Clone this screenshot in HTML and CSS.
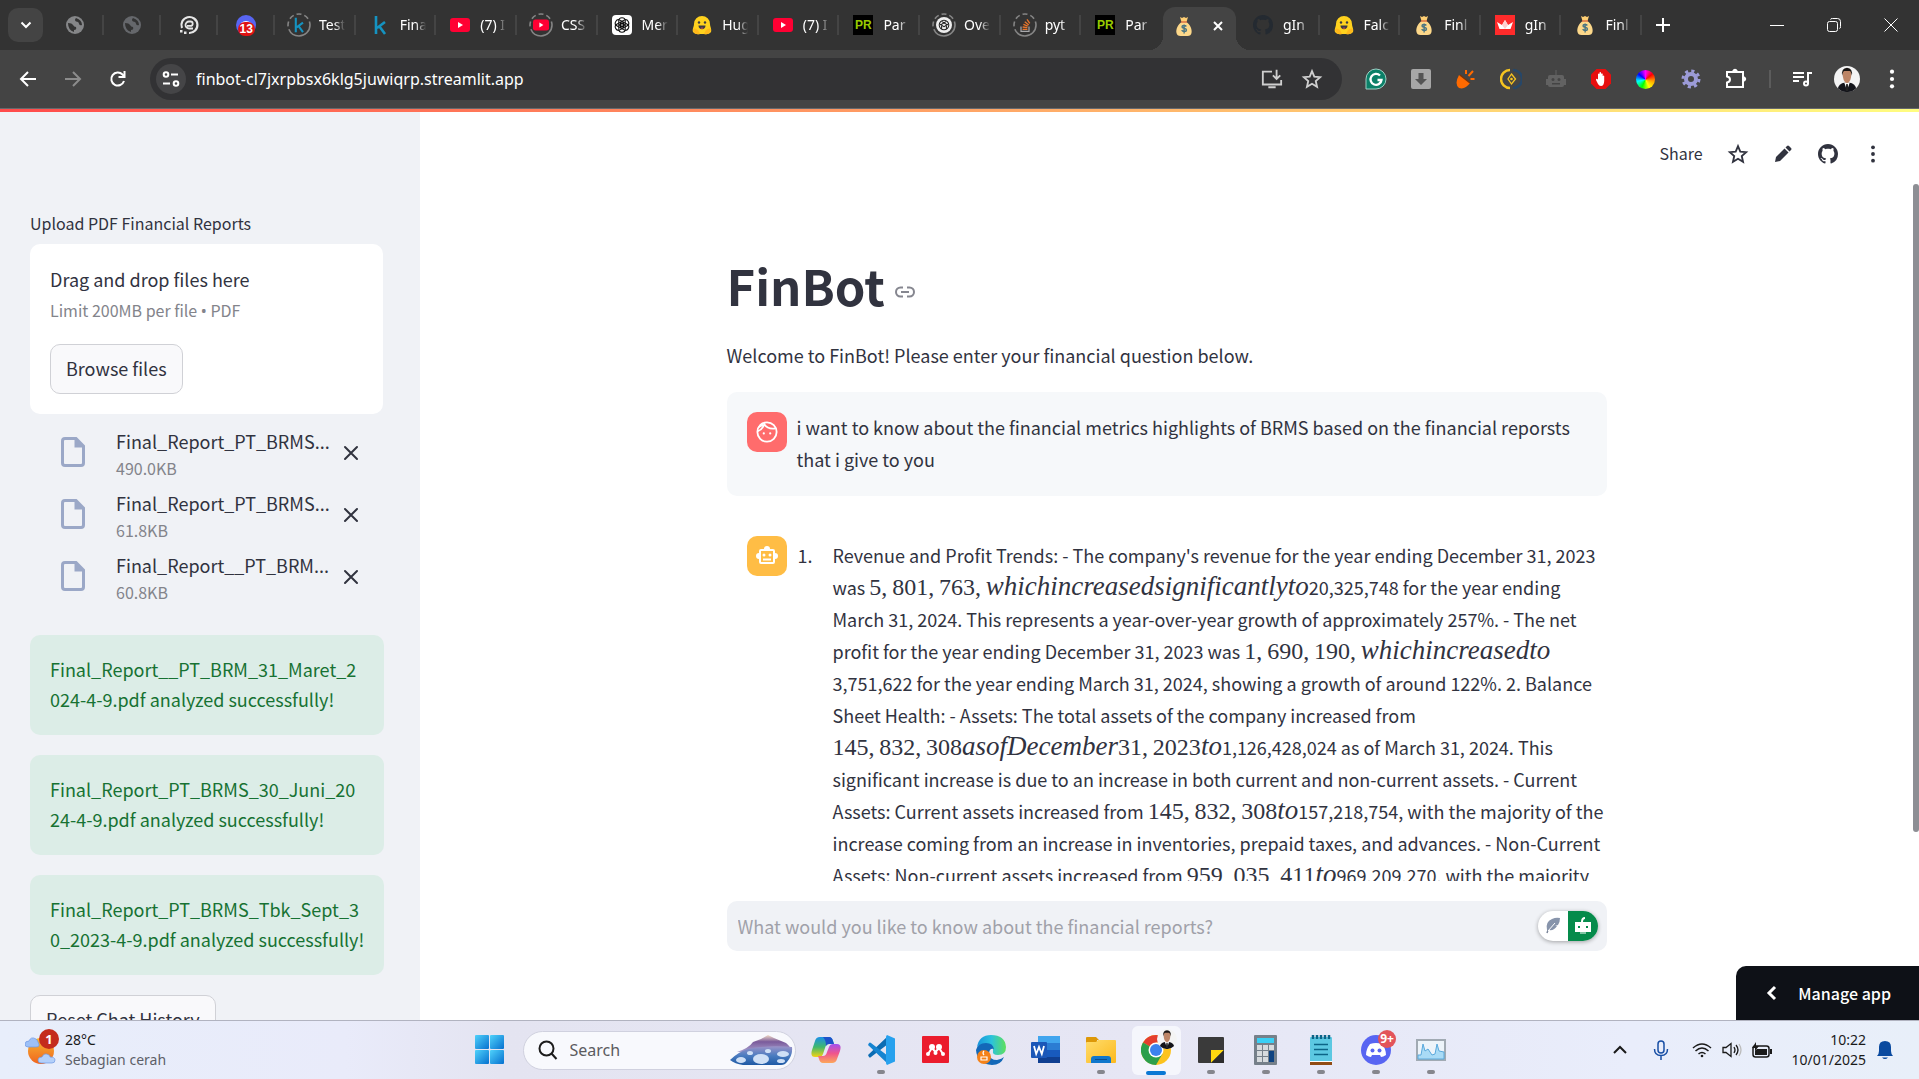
FILE: index.html
```html
<!DOCTYPE html>
<html lang="en">
<head>
<meta charset="utf-8">
<title>FinBot</title>
<link rel="stylesheet" href="styles.css">
</head>
<body>
<svg class="defs" aria-hidden="true">
  <defs>
    <linearGradient id="gWin" x1="0" y1="0" x2="1" y2="1"><stop offset="0" stop-color="#4fd2fb"/><stop offset="1" stop-color="#0670cf"/></linearGradient>
    <linearGradient id="gMount" x1="0" y1="0" x2="0" y2="1"><stop offset="0" stop-color="#f3dcc6"/><stop offset=".4" stop-color="#7a5b9b"/><stop offset="1" stop-color="#a9a0cf"/></linearGradient>
    <linearGradient id="gLake" x1="0" y1="0" x2="0" y2="1"><stop offset="0" stop-color="#9b93c8"/><stop offset=".5" stop-color="#4a7cc0"/><stop offset="1" stop-color="#1f5aa5"/></linearGradient>
    <linearGradient id="gCopA" x1="0" y1="0" x2="0" y2="1"><stop offset="0" stop-color="#1b90e8"/><stop offset=".5" stop-color="#3fb86b"/><stop offset="1" stop-color="#f4d313"/></linearGradient>
    <linearGradient id="gCopB" x1="0" y1="0" x2="0" y2="1"><stop offset="0" stop-color="#a34ff0"/><stop offset=".5" stop-color="#f0558c"/><stop offset="1" stop-color="#fda75a"/></linearGradient>
    <linearGradient id="gEdge" x1="0" y1="0" x2="1" y2="0"><stop offset="0" stop-color="#1793dc"/><stop offset=".5" stop-color="#2bc2dc"/><stop offset="1" stop-color="#5fe05c"/></linearGradient>
    <linearGradient id="gFolder" x1="0" y1="0" x2="1" y2="1"><stop offset="0" stop-color="#ffdc6c"/><stop offset="1" stop-color="#fcb91c"/></linearGradient>
    <linearGradient id="gSun" x1="0" y1="0" x2="0" y2="1"><stop offset="0" stop-color="#f7b733"/><stop offset="1" stop-color="#f0641e"/></linearGradient>
  </defs>
  <symbol id="globe" viewBox="0 0 20 20"><circle cx="10" cy="10" r="9" fill="currentColor"/><path d="M3 8q4 0 5 2 1 2 3 2 1 3-2 3v2Q3 15 3 8zM11 3q-2 2 0 3.500 3 0 3 2.500 1 2 3 1 0-5-6-7z" fill="#333"/></symbol>
  <symbol id="ecircle" viewBox="0 0 20 20"><path d="M3 13A8 8 0 1 1 10 18" fill="none" stroke="#e6e6e6" stroke-width="2.200"/><path d="M14 13.500H10a3.500 3.500 0 0 1 0-7h1.500a2.200 2.200 0 0 1 0 4.400H8" fill="none" stroke="#e6e6e6" stroke-width="1.800"/><path d="M1 15h2.500v2.500H1zM5 16.500h2.500V19H5z" fill="#e6e6e6"/></symbol>
  <symbol id="ring" viewBox="0 0 24 24"><circle cx="12" cy="12" r="11" fill="none" stroke="#858585" stroke-width="1.600" stroke-dasharray="30 3 5 3 5 3 5 3 5 3"/></symbol>
  <symbol id="kaggle" viewBox="0 0 20 20"><path d="M6 1v18M15 7l-8 6M9.500 11.500L15 19" fill="none" stroke="#1593c1" stroke-width="2.600"/></symbol>
  <symbol id="yt" viewBox="0 0 20 20"><rect y="3" width="20" height="14" rx="3" fill="#ff0033"/><path d="M8 7v6l5-3z" fill="#fff"/></symbol>
  <symbol id="gpt" viewBox="0 0 20 20"><rect width="20" height="20" rx="4" fill="#fff"/><g fill="none" stroke="#111" stroke-width="1.100"><path id="petal" d="M10 2.800q3.200 0 3.200 3v4L10 11.700 6.800 9.800v-4q0-3 3.200-3z"/><use href="#petal" transform="rotate(60 10 10)"/><use href="#petal" transform="rotate(120 10 10)"/><use href="#petal" transform="rotate(180 10 10)"/><use href="#petal" transform="rotate(240 10 10)"/><use href="#petal" transform="rotate(300 10 10)"/></g></symbol>
  <symbol id="gptround" viewBox="0 0 20 20"><circle cx="10" cy="10" r="10" fill="#eee"/><g fill="none" stroke="#222" stroke-width="1.300"><circle cx="10" cy="10" r="6"/><path d="M7 5.500l6 3.500v6M13 5.500L7 9v6M5 9l5 3 5-3"/></g></symbol>
  <symbol id="hug" viewBox="0 0 20 20"><path d="M10 1a8 8 0 0 1 8 8c0 3 2 5 1 8-2 3-6 2-9 2s-7 1-9-2c-1-3 1-5 1-8a8 8 0 0 1 8-8z" fill="#ffd21e"/><path d="M1 15c1-3 3-1 5 0l2 4c-3 1-6 0-7-4zM19 15c-1-3-3-1-5 0l-2 4c3 1 6 0 7-4z" fill="#ffb81b"/><circle cx="7" cy="7.500" r="1.200" fill="#3a3b45"/><circle cx="13" cy="7.500" r="1.200" fill="#3a3b45"/><path d="M6.500 10.500h7c0 5-7 5-7 0z" fill="#3a3b45"/><path d="M8.500 13q1.500-1 3 0-1.500 1.500-3 0" fill="#ef4e4e"/></symbol>
  <symbol id="so" viewBox="0 0 20 20"><path d="M5 12v6h10v-6" fill="none" stroke="#a9a9ab" stroke-width="1.500"/><path d="M7 15.500h6M7 12.500l6 .8M8 9.300l5.500 2M9.700 6l5 4M12.500 3l3.500 5" stroke="#e8762c" stroke-width="1.700"/></symbol>
  <symbol id="bag" viewBox="0 0 20 20"><path d="M6 1l2 1 2-1 2 1 2-1-1.500 5h-5z" fill="#ffcf74"/><path d="M7.500 6h5c3 2 6 7 5 11q-.5 3-4 3h-7q-3.500 0-4-3c-1-4 2-9 5-11z" fill="#fdd88a"/><path d="M7 6h6" stroke="#d96a41" stroke-width="1.400"/><path d="M12.300 10.500c-1-1.500-4.300-1.300-4.300.4s4.500 1 4.500 3-3.800 2-4.800.3M10.100 8.500v9" fill="none" stroke="#4a7482" stroke-width="1.400"/></symbol>
  <symbol id="github" viewBox="0 0 16 16"><path fill="currentColor" d="M8 0C3.580 0 0 3.580 0 8c0 3.540 2.290 6.530 5.470 7.590.4.070.55-.17.55-.38 0-.19-.01-.82-.01-1.490-2.010.37-2.530-.49-2.690-.94-.09-.23-.48-.94-.82-1.130-.28-.15-.68-.52-.01-.53.63-.01 1.080.58 1.230.82.72 1.210 1.870.87 2.330.66.07-.52.28-.87.51-1.070-1.780-.2-3.640-.89-3.640-3.950 0-.87.31-1.590.82-2.150-.08-.2-.36-1.020.08-2.120 0 0 .67-.21 2.200.82.64-.18 1.320-.27 2-.27s1.360.09 2 .27c1.530-1.040 2.200-.82 2.200-.82.44 1.100.16 1.920.08 2.120.51.56.82 1.270.82 2.150 0 3.070-1.870 3.750-3.650 3.950.29.25.54.73.54 1.480 0 1.070-.01 1.930-.01 2.200 0 .21.15.46.55.38A8.010 8.010 0 0 0 16 8c0-4.420-3.580-8-8-8z"/></symbol>
  <symbol id="crown" viewBox="0 0 20 20"><rect width="20" height="20" fill="#ff2b2b"/><path d="M2 7l5 3 3-5 3 5 5-3-2.500 7h-11z" fill="#fff"/><path d="M10 5l3 5-3 4-3-4z" fill="#ffd0d0"/></symbol>
  <symbol id="star" viewBox="0 0 24 24"><path fill="none" stroke="currentColor" stroke-width="2" d="M12 3.500l2.500 5.900 6.400.6-4.800 4.200 1.400 6.300-5.500-3.300-5.500 3.300 1.400-6.300L3.100 10l6.400-.6z"/></symbol>
  <symbol id="dots" viewBox="0 0 24 24"><g fill="currentColor"><circle cx="12" cy="4" r="2.300"/><circle cx="12" cy="12" r="2.300"/><circle cx="12" cy="20" r="2.300"/></g></symbol>
  <symbol id="file" viewBox="0 0 24 30"><path d="M1.500 4Q1.500 1.500 4 1.500h11l7.500 7.500v17q0 2.500-2.500 2.500H4q-2.500 0-2.500-2.500z" fill="none" stroke="#9ba8c7" stroke-width="3"/><path d="M13.500 1v9.500H23L15 1z" fill="#9ba8c7"/></symbol>
  <symbol id="cross" viewBox="0 0 16 16"><path d="M2 2l12 12M14 2L2 14" stroke="currentColor" stroke-width="2" stroke-linecap="round"/></symbol>
  <symbol id="man" viewBox="0 0 24 24"><circle cx="12" cy="12" r="12" fill="#f4f4f4"/><path d="M3.500 20.500Q5 16 9.500 15.500h5q4.500.5 6 5A12 12 0 0 1 3.500 20.500z" fill="#14151b"/><path d="M9.500 15.500l2.500 7 2.500-7z" fill="#fff"/><path d="M11.300 16.500h1.400l.6 5-1.300 2-1.300-2z" fill="#222"/><path d="M8 7q0-4 4-4t4 4q0 8-4 9-4-1-4-9z" fill="#bd8566"/><path d="M7.500 9q-1-7 4.500-7.500 5.500.5 4.500 7.500-.5-4-2-4.500h-5q-1.500.5-2 4.500z" fill="#191513"/></symbol>
</svg>

<header class="browser">
  <div class="tabstrip">
    <button class="tab-search" aria-label="Search tabs"><svg width="14" height="14" viewBox="0 0 14 14"><path d="M2.500 4.500L7 9l4.500-4.500" fill="none" stroke="#fff" stroke-width="2"/></svg></button>
    <nav class="tabs" aria-label="Tabs">
      <div class="tab pinned"><svg class="fav dim"><use href="#globe"/></svg></div>
      <div class="tab pinned"><svg class="fav dimmer"><use href="#globe"/></svg></div>
      <div class="tab pinned"><svg class="fav"><use href="#ecircle"/></svg></div>
      <div class="tab pinned"><span class="badged"><svg class="fav" viewBox="0 0 20 20"><circle cx="10" cy="10" r="10" fill="#5865f2"/><path d="M5 8q5-4 10 0z" fill="#fff"/></svg><b class="count">13</b></span></div>
      <div class="tab"><span class="ringed"><svg class="ring"><use href="#ring"/></svg><svg class="fav small"><use href="#kaggle"/></svg></span><span class="label">Test</span></div>
      <div class="tab"><span class="ringed"><svg class="fav"><use href="#kaggle"/></svg></span><span class="label">Fina</span></div>
      <div class="tab"><span class="ringed"><svg class="fav"><use href="#yt"/></svg></span><span class="label">(7) I</span></div>
      <div class="tab"><span class="ringed"><svg class="ring"><use href="#ring"/></svg><svg class="fav small"><use href="#yt"/></svg></span><span class="label">CSS</span></div>
      <div class="tab"><span class="ringed"><svg class="fav"><use href="#gpt"/></svg></span><span class="label">Mer</span></div>
      <div class="tab"><span class="ringed"><svg class="fav"><use href="#hug"/></svg></span><span class="label">Hug</span></div>
      <div class="tab"><span class="ringed"><svg class="fav"><use href="#yt"/></svg></span><span class="label">(7) I</span></div>
      <div class="tab"><span class="ringed"><i class="fav pr">PR</i></span><span class="label">Par</span></div>
      <div class="tab"><span class="ringed"><svg class="ring"><use href="#ring"/></svg><svg class="fav small"><use href="#gptround"/></svg></span><span class="label">Ove</span></div>
      <div class="tab"><span class="ringed"><svg class="ring"><use href="#ring"/></svg><svg class="fav small"><use href="#so"/></svg></span><span class="label">pyt</span></div>
      <div class="tab last"><span class="ringed"><i class="fav pr">PR</i></span><span class="label">Par</span></div>
      <div class="tab active"><svg class="fav"><use href="#bag"/></svg><button class="tab-close" aria-label="Close tab"><svg width="12" height="12"><path d="M2 2l8 8M10 2l-8 8" stroke="#fff" stroke-width="2"/></svg></button></div>
      <div class="tab"><span class="ringed"><svg class="fav ghdark"><use href="#github"/></svg></span><span class="label">gIn</span></div>
      <div class="tab"><span class="ringed"><svg class="fav"><use href="#hug"/></svg></span><span class="label">Falc</span></div>
      <div class="tab"><span class="ringed"><svg class="fav"><use href="#bag"/></svg></span><span class="label">Finl</span></div>
      <div class="tab"><span class="ringed"><svg class="fav"><use href="#crown"/></svg></span><span class="label">gIn</span></div>
      <div class="tab"><span class="ringed"><svg class="fav"><use href="#bag"/></svg></span><span class="label">Finl</span></div>
    </nav>
    <div class="window-side">
      <button class="newtab" aria-label="New tab"><svg width="14" height="14"><path d="M7 0v14M0 7h14" stroke="#fff" stroke-width="2"/></svg></button>
      <div class="window-controls">
        <button aria-label="Minimize"><svg width="14" height="14"><path d="M0 7.500h14" stroke="#fff"/></svg></button>
        <button aria-label="Restore"><svg width="14" height="14" fill="none" stroke="#fff"><rect x=".5" y="3.500" width="10" height="10" rx="2"/><path d="M3.500 1.500q0-1 2-1h5q3 0 3 3v5q0 2-1 2"/></svg></button>
        <button aria-label="Close"><svg width="14" height="14"><path d="M.5.5l13 13M13.500.5l-13 13" stroke="#fff"/></svg></button>
      </div>
    </div>
  </div>
  <div class="toolbar">
    <div class="nav-buttons">
      <button aria-label="Back"><svg width="18" height="18" fill="none" stroke="#fff" stroke-width="2"><path d="M17 9H2M9 2L2 9l7 7"/></svg></button>
      <button aria-label="Forward"><svg width="18" height="18" fill="none" stroke="#8c8c8c" stroke-width="2"><path d="M1 9h15M9 2l7 7-7 7"/></svg></button>
      <button aria-label="Reload"><svg width="18" height="18" fill="none" stroke="#fff" stroke-width="2"><path d="M15 11A6.500 6.500 0 1 1 13.500 4.500L15 6"/><path d="M15.500 1v6h-6"/></svg></button>
    </div>
    <div class="omnibox">
      <button class="site-info" aria-label="Site information"><svg width="18" height="18" fill="none" stroke="#fff" stroke-width="2"><circle cx="4" cy="4.500" r="2.300"/><path d="M9 4.500h7M1 13.500h7"/><circle cx="14" cy="13.500" r="2.300"/></svg></button>
      <input class="url" aria-label="Address" value="finbot-cl7jxrpbsx6klg5juwiqrp.streamlit.app">
      <button class="omni-btn" aria-label="Install app"><svg width="22" height="22" viewBox="0 0 24 24" fill="none" stroke="#cfcfcf" stroke-width="2"><path d="M12 4H2v14h20v-5M8 21h8M17 2v9M13 8l4 4 4-4"/></svg></button>
      <button class="omni-btn" aria-label="Bookmark"><svg width="22" height="22" color="#cfcfcf"><use href="#star"/></svg></button>
    </div>
    <div class="extensions">
      <button aria-label="Grammarly"><svg width="22" height="22" viewBox="0 0 22 22"><path d="M11 1a10 10 0 1 1 0 20H1V11A10 10 0 0 1 11 1z" fill="#0b8068" stroke="#9ccfc4"/><path d="M15 7.500A5.500 5.500 0 1 0 16.500 12h-4" fill="none" stroke="#fff" stroke-width="2.300"/></svg></button>
      <button aria-label="Downloader"><svg width="22" height="22"><rect x="1" y="1" width="20" height="20" rx="2" fill="#a7a7a7"/><path d="M8.500 5h5v6H17l-6 6-6-6h3.500z" fill="#555"/></svg></button>
      <button aria-label="Capture"><svg width="22" height="22"><path d="M4 7q-5 9 0 13 6 2 11-5z" fill="#ff6a00"/><path d="M5 7l10 8" stroke="#7c3306" stroke-width="1.500"/><path d="M11 6V2M13.500 8L18 3M15.500 11h4" stroke="#ff6a00" stroke-width="2"/></svg></button>
      <button aria-label="Recorder"><svg width="22" height="22" fill="none"><path d="M10 2a9 9 0 0 0 0 18" stroke="#f6c420" stroke-width="2.500"/><path d="M13 2a9 9 0 0 1 0 18" stroke="#264769" stroke-width="2.500"/><path d="M11.500 6l4 5-4 5-3.500-5z" stroke="#f6c420" stroke-width="1.300"/><circle cx="11.500" cy="11" r="1.300" fill="#f6c420"/></svg></button>
      <button aria-label="Robot"><svg width="22" height="22" fill="#626262"><rect x="3" y="7" width="16" height="12" rx="2"/><rect x="1" y="11" width="20" height="6"/><path d="M10.500 2h1v5h-1z"/><circle cx="8" cy="11.500" r="1.500" fill="#444"/><circle cx="14" cy="11.500" r="1.500" fill="#444"/><path d="M7 15h8v1.500H7z" fill="#444"/></svg></button>
      <button aria-label="Ad blocker"><svg width="22" height="22"><path d="M6.500 1h9L21 6.500v9L15.500 21h-9L1 15.500v-9z" fill="#e60f0f"/><path d="M8 16l-2-4q0-2 2-.500V6q1-1 1.500 0V4.500q1-1 1.500 0V6q1-1.500 1.700 0v2q1-1 1.500 0v5q-.2 5-3.200 5-2 0-3-2z" fill="#fff"/></svg></button>
      <button aria-label="Color picker"><span class="wheel"></span></button>
      <button aria-label="Settings extension"><svg width="22" height="22"><circle cx="11" cy="11" r="5" fill="none" stroke="#9c9bd8" stroke-width="4"/><circle cx="11" cy="11" r="8" fill="none" stroke="#9c9bd8" stroke-width="3" stroke-dasharray="3.142 3.142"/></svg></button>
      <button aria-label="Extensions"><svg width="22" height="22" viewBox="0 0 22 22" fill="none" stroke="#fff" stroke-width="2"><path d="M2 4h16v15H2v-4.500q3-.5 3-3T2 8.500z"/><path d="M8 3.500q2-3.500 4 0zM18.500 9q3.500 2 0 4z" fill="#fff"/></svg></button>
    </div>
    <span class="divider"></span>
    <div class="extensions">
      <button aria-label="Media"><svg width="22" height="22" fill="none" stroke="#fff" stroke-width="2"><path d="M2 5h11M2 9h11M2 13h6M17 16V5h4"/><circle cx="15" cy="15.500" r="2"/></svg></button>
      <button aria-label="Profile"><svg width="26" height="26"><use href="#man"/></svg></button>
      <button aria-label="Menu"><svg width="22" height="22" color="#fff"><use href="#dots"/></svg></button>
    </div>
  </div>
</header>
<div class="decoration"></div>

<div class="app">
  <aside class="sidebar">
    <label class="upload-label" for="browse">Upload PDF Financial Reports</label>
    <div class="dropzone">
      <span>Drag and drop files here</span>
      <small>Limit 200MB per file <span class="bullet">•</span> PDF</small>
      <button class="btn" id="browse">Browse files</button>
    </div>
    <ul class="files">
      <li><svg class="file-icon"><use href="#file"/></svg><div class="file-text"><span>Final_Report_PT_BRMS...</span><small>490.0KB</small></div><button aria-label="Remove file"><svg width="16" height="16"><use href="#cross"/></svg></button></li>
      <li><svg class="file-icon"><use href="#file"/></svg><div class="file-text"><span>Final_Report_PT_BRMS...</span><small>61.8KB</small></div><button aria-label="Remove file"><svg width="16" height="16"><use href="#cross"/></svg></button></li>
      <li><svg class="file-icon"><use href="#file"/></svg><div class="file-text"><span>Final_Report__PT_BRM...</span><small>60.8KB</small></div><button aria-label="Remove file"><svg width="16" height="16"><use href="#cross"/></svg></button></li>
    </ul>
    <div class="alerts">
      <p class="alert">Final_Report__PT_BRM_31_Maret_2<br>024-4-9.pdf analyzed successfully!</p>
      <p class="alert">Final_Report_PT_BRMS_30_Juni_20<br>24-4-9.pdf analyzed successfully!</p>
      <p class="alert">Final_Report_PT_BRMS_Tbk_Sept_3<br>0_2023-4-9.pdf analyzed successfully!</p>
    </div>
    <button class="btn">Reset Chat History</button>
  </aside>

  <main class="main">
    <div class="app-header">
      <button class="share">Share</button>
      <button aria-label="Favorite"><svg width="22" height="22"><use href="#star"/></svg></button>
      <button aria-label="Edit"><svg width="20" height="20" viewBox="0 0 20 20" fill="currentColor"><path d="M2 18l1-5 8.500-8.500 4 4L7 17zM12.500 3.500l1.500-1.500q1-1 2 0l2 2q1 1 0 2l-1.500 1.500z"/></svg></button>
      <button aria-label="GitHub"><svg width="20" height="20"><use href="#github"/></svg></button>
      <button aria-label="App menu"><svg width="20" height="20"><use href="#dots"/></svg></button>
    </div>
    <div class="scroll">
      <div class="block">
        <h1>FinBot <a href="#finbot" aria-label="Link to heading"><svg width="20" height="12" fill="none" stroke="#85868f" stroke-width="2"><path d="M8 1.500H5.500a4.500 4.500 0 0 0 0 9H8M12 1.500h2.500a4.500 4.500 0 0 1 0 9H12M6 6h8"/></svg></a></h1>
        <p class="welcome">Welcome to FinBot! Please enter your financial question below.</p>
        <section class="message user">
          <span class="avatar"><svg width="22" height="22" viewBox="0 0 24 24" fill="none" stroke="#fff" stroke-width="2"><circle cx="12" cy="12" r="10.500"/><path d="M2 11Q7 9.500 9 3.500q4 6 12.500 4.500" /><path d="M3 6.500L8 4"/><circle cx="8.500" cy="13.500" r="1.200" fill="#fff" stroke="none"/><circle cx="15.500" cy="13.500" r="1.200" fill="#fff" stroke="none"/></svg></span>
          <p>i want to know about the financial metrics highlights of BRMS based on the financial reporsts that i give to you</p>
        </section>
        <section class="message bot">
          <span class="avatar"><svg width="24" height="24" viewBox="0 0 24 24"><path fill="#fff" d="M20 9V7q0-2-2-2h-3a3 3 0 0 0-6 0H6Q4 5 4 7v2a3 3 0 0 0 0 6v3q0 2 2 2h12q2 0 2-2v-3a3 3 0 0 0 0-6z"/><path d="M6 7h12v11H6z" fill="#ffbd45"/><g fill="#fff"><circle cx="9" cy="11" r="1.500"/><circle cx="15" cy="11" r="1.500"/><path d="M8 14.500h8v2H8z"/></g></svg></span>
          <ol>
            <li>Revenue and Profit Trends: - The company's revenue for the year ending December 31, 2023<br>
            was <span class="math">5,&thinsp;801,&thinsp;763,&thinsp;<i>whichincreasedsignificantlyto</i></span>20,325,748 for the year ending<br>
            March 31, 2024. This represents a year-over-year growth of approximately 257%. - The net<br>
            profit for the year ending December 31, 2023 was <span class="math">1,&thinsp;690,&thinsp;190,&thinsp;<i>whichincreasedto</i></span><br>
            3,751,622 for the year ending March 31, 2024, showing a growth of around 122%. 2. Balance<br>
            Sheet Health: - Assets: The total assets of the company increased from<br>
            <span class="math">145,&thinsp;832,&thinsp;308<i>asofDecember</i>31,&thinsp;2023<i>to</i></span>1,126,428,024 as of March 31, 2024. This<br>
            significant increase is due to an increase in both current and non-current assets. - Current<br>
            Assets: Current assets increased from <span class="math">145,&thinsp;832,&thinsp;308<i>to</i></span>157,218,754, with the majority of the<br>
            increase coming from an increase in inventories, prepaid taxes, and advances. - Non-Current<br>
            Assets: Non-current assets increased from <span class="math">959,&thinsp;035,&thinsp;411<i>to</i></span>969,209,270, with the majority</li>
          </ol>
        </section>
      </div>
      <div class="track"><div class="thumb"></div></div>
    </div>
    <div class="composer">
      <div class="chat-input">
        <input aria-label="Chat message" placeholder="What would you like to know about the financial reports?">
        <div class="pill">
          <svg width="30" height="30"><path d="M9 22q1-5 5-9" fill="none" stroke="#7a8599" stroke-width="1.500"/><path d="M9 19q-2-8 5-11 4-2 8-1 0 4-2 7l-3 1h2q-3 5-8 4z" fill="#8794ab"/><path d="M10 20l7-8" stroke="#fff"/></svg>
          <svg class="pill-bot" width="30" height="30"><path d="M7 11h16v10H7z" fill="#fff"/><path d="M14 11q0-4 3-4" fill="none" stroke="#fff" stroke-width="2"/><path d="M12 22h6" stroke="#fff"/><path d="M10 15h2v2h-2zM18 15h2v2h-2z" fill="#058b4b"/></svg>
        </div>
      </div>
    </div>
    <button class="manage"><svg width="12" height="16"><path d="M9 2L3 8l6 6" fill="none" stroke="#fff" stroke-width="3"/></svg>Manage app</button>
  </main>
</div>

<footer class="taskbar">
  <button class="weather">
    <span class="weather-icon"><svg width="34" height="34" viewBox="0 0 34 34"><circle cx="16" cy="18" r="13" fill="url(#gSun)"/><path d="M3 14q-3 0-3-3 0-3 4-3 2-5 7-2 2 2 2 3 3 5-2 5z" fill="#9cc0f8" stroke="#6e98e4" stroke-width=".7"/><path d="M16 30q-3 0-3-3t4-3q2-5 7-2 1 1 1 2 5 0 5 3t-3 3z" fill="#b4d0fa" stroke="#6e98e4" stroke-width=".7"/></svg><b>1</b></span>
    <span class="weather-text"><span>28°C</span><span class="muted">Sebagian cerah</span></span>
  </button>
  <div class="dock">
    <button class="app-btn" aria-label="Start"><svg width="30" height="30" fill="url(#gWin)"><rect x="0" y="0" width="14" height="14" rx="1"/><rect x="15" y="0" width="14" height="14" rx="1"/><rect x="0" y="15" width="14" height="14" rx="1"/><rect x="15" y="15" width="14" height="14" rx="1"/></svg></button>
    <div class="search">
      <svg width="20" height="20" fill="none" stroke="#1c1c1c" stroke-width="2"><circle cx="8.500" cy="8.500" r="7"/><path d="M13.500 13.500L18.500 19"/></svg>
      <input aria-label="Search" placeholder="Search">
      <svg width="64" height="32" viewBox="0 0 64 32"><path d="M8 18q12-4 16-10l8-3 7-4 6 3 12 5q5 4 6 9z" fill="url(#gMount)"/><path d="M1 26q8-8 18-11 20-4 44-2 1 8-5 15-2 3-6 3H14Q6 30 1 26z" fill="url(#gLake)"/><g fill="#cfe0f6"><ellipse cx="12" cy="26" rx="5" ry="3"/><ellipse cx="32" cy="25" rx="8" ry="5"/><ellipse cx="54" cy="20" rx="6" ry="3"/><ellipse cx="39" cy="17" rx="3" ry="2"/><ellipse cx="21" cy="19" rx="3" ry="2"/><ellipse cx="52" cy="27" rx="4" ry="2"/></g></svg>
    </div>
    <button class="app-btn" aria-label="Copilot"><svg width="30" height="30" viewBox="0 0 30 30"><path d="M9 2h9q3 0 4 4l1 3h-5q-3 0-4 4l-2 6q-1 3-4 3H4q-5 0-3-7l3-9q1-4 5-4z" fill="url(#gCopA)"/><path d="M18 2q3 0 4 4l1 3h-5q-2 0-3 2 0-6-3-9z" fill="#1d52c9"/><path d="M21 28h-9q-3 0-4-4l-1-3h5q3 0 4-4l2-5q1-3 4-3h4q5 0 3 7l-3 8q-1 4-5 4z" fill="url(#gCopB)"/></svg></button>
    <button class="app-btn open" aria-label="Visual Studio Code"><svg width="30" height="30" viewBox="0 0 30 30"><path d="M2 20L22 1v8L5 22q-1 1-2 0z" fill="#0b6cb3"/><path d="M2 10L22 29v-8L5 8Q4 7 3 8z" fill="#1584d1"/><path d="M21 0l8 3.500v23L21 30q-1-1-1-2V2q0-1 1-2z" fill="#27a1ee"/></svg></button>
    <button class="app-btn" aria-label="Mendeley"><svg width="28" height="28"><rect width="27" height="27" rx="1" fill="#eb1c2d"/><g fill="#fff"><circle cx="10" cy="11" r="3"/><circle cx="17" cy="11" r="3"/><circle cx="6" cy="18" r="2"/><circle cx="21" cy="18" r="2"/><circle cx="13.500" cy="17" r="2"/></g><path d="M6 18l4-6 3.500 4 3.500-4 4 6" stroke="#fff" stroke-width="2" fill="none"/></svg></button>
    <button class="app-btn" aria-label="Microsoft Edge"><svg width="30" height="30" viewBox="0 0 30 30"><path d="M1 12Q3 0 15 0q14 0 15 12 0 8-8 8-6 0-5-4 1-6-6-7-7 0-10 3z" fill="url(#gEdge)"/><path d="M0 15q2-7 10-7 7 0 8 6-5-1-5 5 1 6 8 6 5-1 7-3-3 8-12 8Q1 29 0 15z" fill="#1368b8"/><circle cx="8" cy="22" r="7" fill="#f58219"/><path d="M5 22h6v3H5zM8 16q-2 2 0 4" fill="none" stroke="#fff" stroke-width="1.200"/></svg></button>
    <button class="app-btn" aria-label="Word"><svg width="30" height="30" viewBox="0 0 30 30"><path d="M7 1h22v8H7z" fill="#41a5ee"/><path d="M7 8h22v7H7z" fill="#2b7cd3"/><path d="M7 15h22v7H7z" fill="#185abd"/><path d="M7 22h22v6H7z" fill="#103f91"/><rect y="7" width="16" height="16" rx="1" fill="#1b57b8"/><path d="M3 11l2.200 8L8 12l2.800 7L13 11" fill="none" stroke="#fff" stroke-width="1.800"/></svg></button>
    <button class="app-btn open" aria-label="File Explorer"><svg width="30" height="30" viewBox="0 0 30 30"><path d="M0 3q0-1 1-1h9l3 3h-2v5H0z" fill="#dd9808"/><path d="M0 8q0-1 1-1h9l2-2h17q1 0 1 1v21q0 1-1 1H1q-1 0-1-1z" fill="url(#gFolder)"/><path d="M5 28v-4q0-3 3-3h14q3 0 3 3v4z" fill="#1077cc"/><path d="M9 24.500h12" stroke="#0a4e90"/></svg></button>
    <button class="app-btn open current" aria-label="Google Chrome"><svg width="36" height="36" viewBox="0 0 36 36"><circle cx="15" cy="21" r="15" fill="#fcc31e"/><path d="M15 21L2 13.500A15 15 0 0 1 28 13.500H15z" fill="#e43e2f"/><path d="M2 13.500A15 15 0 0 0 15 36l6.500-11.200L15 21z" fill="#2c9f4b"/><circle cx="15" cy="21" r="7.500" fill="#fff"/><circle cx="15" cy="21" r="6" fill="#3c82ee"/><svg x="16" y="0" width="20" height="20"><use href="#man"/></svg></svg></button>
    <button class="app-btn open" aria-label="Sticky Notes"><svg width="26" height="26"><rect width="26" height="26" rx="1" fill="#3a3a3a"/><path d="M13 26V13h13z" fill="#ffd90f"/><path d="M13 26l13-13v13z" fill="#2d2d2d"/></svg></button>
    <button class="app-btn open" aria-label="Calculator"><svg width="24" height="30"><rect width="23" height="30" rx="1" fill="#76808a"/><path d="M3 3h17v5H3z" fill="#3ad0f5"/><path d="M3 10h5v5H3zM9 10h5v5H9zM15 10h5v5h-5zM3 16h5v5H3zM9 16h5v5H9zM3 22h5v5H3zM9 22h5v5H9z" fill="#d7dbde"/><path d="M15 16h5v11h-5z" fill="#0f4380"/></svg></button>
    <button class="app-btn open" aria-label="Notepad"><svg width="24" height="30"><rect x="1" y="2" width="22" height="26" rx="1" fill="#5cc8e2"/><path d="M1 26h22v1H1z" fill="#fff"/><path d="M1 27h22v3H1z" fill="#914c14"/><path d="M5 9.500h14M5 14.500h14M5 19.500h14" stroke="#0c6487" stroke-width="1.500"/><path d="M4 0v4M8 0v4M12 0v4M16 0v4M20 0v4" stroke="#0c6487" stroke-width="2.500"/></svg></button>
    <button class="app-btn open" aria-label="Discord"><span class="badged"><svg width="30" height="30"><circle cx="15" cy="15" r="15" fill="#5865f2"/><path d="M9 9q6-2 12 0 4 5 4 11-3 2-5 2l-1-2h-8l-1 2q-2 0-5-2 0-6 4-11z" fill="#fff"/><circle cx="11.500" cy="15.500" r="2" fill="#5865f2"/><circle cx="18.500" cy="15.500" r="2" fill="#5865f2"/></svg><b class="many">9+</b></span></button>
    <button class="app-btn open" aria-label="Task monitor"><svg width="30" height="22"><rect x="1" y="1" width="28" height="20" fill="#edf4fa" stroke="#a1aab3" stroke-width="2"/><path d="M2 16l3 0 2-11 2 7 3-2 4 6 3-1 2-10 2 7 5 1v7H2z" fill="#a9dbf6" stroke="#5aa9dc"/></svg></button>
  </div>
  <div class="tray">
    <svg width="16" height="16" fill="none" stroke="#1a1a1a" stroke-width="2"><path d="M2 11l6-6 6 6"/></svg>
    <svg class="mic" width="16" height="20" fill="none" stroke="#184fa5" stroke-width="1.500"><rect x="5" y="1" width="6" height="12" rx="3"/><path d="M1.500 9q0 6.500 6.500 6.500T14.500 9M8 15.500V20"/></svg>
    <svg width="20" height="16" viewBox="0 0 20 16" fill="none" stroke="#1a1a1a" stroke-width="1.500"><path d="M1 6q9-8 18 0M3.500 9q6.500-6 13 0M6.500 12q3.500-3 7 0"/><circle cx="10" cy="14" r="1.300" fill="#1a1a1a" stroke="none"/></svg>
    <svg width="20" height="16" viewBox="0 0 20 16" fill="none" stroke="#1a1a1a" stroke-width="1.300"><path d="M1 5.500h3l5-4v13l-5-4H1zM12 5q2 3 0 6M14 3q4 5 0 10"/><path d="M17 2q4 6 0 12" stroke="#bbb"/></svg>
    <svg width="20" height="16" viewBox="0 0 20 16"><rect x="1" y="4" width="16" height="11" rx="2.500" fill="none" stroke="#1a1a1a" stroke-width="1.500"/><path d="M5 7h10v6H3V9zM18 7h2v5h-2zM4 0L0 6h3v3l4-5H4z" fill="#1a1a1a"/></svg>
    <span class="clock"><span>10:22</span><span>10/01/2025</span></span>
    <svg width="18" height="20"><path d="M1 16q2-2 2-5V7q0-6 6-6t6 6v4q0 3 2 5zM6 17.500h6q-3 3-6 0z" fill="#0a4a9f"/></svg>
  </div>
</footer>
</body>
</html>
```
FILE: styles.css
```css
:root {
  --ui: "Noto Sans", "Open Sans", sans-serif;
  --body: "Noto Sans CJK SC", "Source Sans Pro", sans-serif;
  --ink: #31333f;
}

* { box-sizing: border-box; }

body {
  margin: 0;
  height: 100vh;
  display: flex;
  flex-direction: column;
  overflow: hidden;
  font-family: var(--ui);
  background: #fff;
}

button {
  border: 0;
  padding: 0;
  background: none;
  color: inherit;
  font: inherit;
  display: flex;
  align-items: center;
  justify-content: center;
}

input { border: 0; padding: 0; background: none; font: inherit; outline: 0; min-width: 0; }
svg { display: block; flex: none; }
.defs { position: absolute; width: 0; height: 0; }

/* Browser frame */
.browser { flex: none; color: #fff; background: #444; border-bottom: 1px solid #66686c; }
.tabstrip { display: flex; align-items: center; height: 50px; padding-left: 8px; background: #333; }
.tab-search { width: 35px; height: 34px; border-radius: 10px; background: #444; flex: none; margin-right: 4px; }
.tabs { flex: 1; display: flex; min-width: 0; align-items: center; }
.tab {
  flex: 1 1 0;
  min-width: 0;
  height: 20px;
  display: flex;
  align-items: center;
  gap: 8px;
  padding-left: 12px;
  border-right: 2px solid #444;
}
.tab.pinned { flex: 0 0 57px; padding: 0; justify-content: center; }
.tab.last { border-color: transparent; }
.tab.active {
  position: relative;
  flex: 0 0 73px;
  height: 43px;
  margin: 7px 3px 0 1px;
  padding: 0 12px 6px 11px;
  border: 0;
  border-radius: 12px 12px 0 0;
  background: #444;
  justify-content: space-between;
}
.tab.active::before, .tab.active::after {
  content: "";
  position: absolute;
  bottom: 0;
  width: 14px;
  height: 14px;
}
.tab.active::before { right: 100%; background: radial-gradient(circle at 0 0, transparent 14px, #444 14px); }
.tab.active::after { left: 100%; background: radial-gradient(circle at 100% 0, transparent 14px, #444 14px); }
.fav { width: 20px; height: 20px; }
.fav.small { width: 16px; height: 16px; }
.dim { color: #858688; }
.dimmer { color: #65676b; }
.ghdark { color: #242a31; }
.ringed { display: grid; place-items: center; flex: none; width: 24px; height: 24px; }
.ringed > * { grid-area: 1 / 1; }
.ring { width: 24px; height: 24px; }
.pr { background: #000; color: #9c0; font: bold 12px/20px "Liberation Sans", sans-serif; text-align: center; }
.label {
  flex: none;
  width: 26px;
  overflow: hidden;
  white-space: nowrap;
  font-size: 14px;
  line-height: 20px;
  mask-image: linear-gradient(90deg, #000 60%, transparent);
}
.badged { position: relative; }
.count {
  position: absolute;
  left: 2px;
  top: 7px;
  padding: 0 2px;
  border-radius: 7px;
  background: #e01212;
  font: bold 12px/14px "Liberation Sans", sans-serif;
}
.window-side { flex: none; width: 277px; display: flex; align-items: center; justify-content: space-between; }
.newtab { width: 42px; height: 34px; }
.window-controls { display: flex; }
.window-controls button { width: 57px; height: 34px; }

.toolbar { height: 58px; display: flex; align-items: center; padding: 0 5px; }
.nav-buttons { display: flex; margin-right: 10px; }
.nav-buttons button { width: 45px; height: 34px; }
.omnibox {
  flex: 1;
  display: flex;
  align-items: center;
  height: 42px;
  border-radius: 21px;
  background: #323234;
  padding: 0 10px 0 6px;
}
.site-info { width: 30px; height: 30px; border-radius: 50%; background: #454547; margin-right: 10px; }
.url { flex: 1; color: #fff; font-size: 16px; height: 30px; }
.omni-btn { width: 40px; height: 34px; }
.extensions { display: flex; }
.extensions button { width: 45px; height: 34px; }
.omnibox + .extensions { margin-left: 11px; }
.divider { width: 2px; height: 18px; background: #5c5c5c; margin: 0 8px 0 11px; }
.wheel {
  width: 19px;
  height: 19px;
  border-radius: 50%;
  background: conic-gradient(#f0f, red, orange, #ff0, #0f0, #0ff, #00f, #f0f);
}
.decoration { flex: none; height: 3px; background: linear-gradient(90deg, #ff4b4b, #fffd80); }

/* Streamlit app */
.app { flex: 1; min-height: 0; display: flex; font-family: var(--body); font-size: 18px; color: var(--ink); }
.sidebar { flex: none; width: 420px; padding: 95px 37px 0 30px; background: #f0f2f6; overflow: hidden; }
.upload-label { display: block; font-size: 16px; line-height: 32px; margin-bottom: 5px; }
.dropzone {
  display: flex;
  flex-direction: column;
  align-items: flex-start;
  background: #fff;
  border-radius: 10px;
  padding: 20px;
  line-height: 30px;
}
.dropzone small { font-size: 16px; line-height: 32px; color: #83848b; margin-bottom: 17px; }
.bullet { font-family: var(--ui); }
.btn {
  height: 50px;
  padding: 0 15px 2px;
  border: 1px solid #d0d1d6;
  border-radius: 10px;
  background: #f9f9fb;
  color: var(--ink);
  white-space: nowrap;
}
.files { list-style: none; margin: 14px 0 21px; padding: 0 16px 0 31px; }
.files li { height: 62px; display: flex; align-items: flex-start; }
.file-icon { width: 24px; height: 30px; margin-top: 9px; }
.file-text { flex: 1; min-width: 0; margin-left: 31px; display: flex; flex-direction: column; white-space: nowrap; line-height: 26px; }
.file-text small { font-size: 16px; line-height: 28px; color: #83848b; }
.files button { width: 32px; height: 50px; }
.alerts { display: grid; gap: 20px; margin-bottom: 20px; }
.alert {
  margin: 0;
  padding: 19px 20px 21px;
  border-radius: 10px;
  background: #dcede7;
  color: #177233;
  line-height: 30px;
  white-space: nowrap;
}

.main { position: relative; flex: 1; min-width: 0; display: flex; flex-direction: column; background: #fff; }
.app-header {
  flex: none;
  height: 72px;
  padding: 12px 24px 0 0;
  display: flex;
  justify-content: flex-end;
  align-items: center;
  font-size: 16px;
}
.app-header button { width: 45px; height: 40px; }
.app-header .share { width: 68px; padding-bottom: 2px; }
.scroll { flex: 1; min-height: 0; display: flex; overflow: hidden; }
.block { flex: 1 1 0; min-width: 0; max-width: 880px; margin: 0 auto; padding-top: 61px; }
.track { flex: none; width: 6px; }
.thumb { height: 93%; background: #8d8e94; border-radius: 3px; }
h1 {
  margin: 0;
  font-size: 49px;
  line-height: 80px;
  font-weight: 700;
  display: flex;
  align-items: center;
  gap: 10px;
}
h1 a { margin-top: 14px; }
.welcome { margin: 14px 0 21px; line-height: 32px; }
.message { display: flex; gap: 10px; padding: 20px 0 20px 20px; border-radius: 10px; line-height: 32px; }
.message.user { background: #f6f8fa; padding-right: 20px; margin-bottom: 20px; }
.message p { margin: -1px 0 1px; }
.avatar { flex: none; width: 40px; height: 40px; border-radius: 10px; display: grid; place-items: center; background: #ff6c6c; }
.bot .avatar { background: #ffbd45; }
.message ol { margin: 3px 0 0; padding-left: 20px; white-space: nowrap; }
.message li { padding-left: 16px; }
.math { font-family: "Liberation Serif", serif; font-size: 24px; line-height: 20px; }
.math i { font-size: 27px; line-height: 20px; }

.composer { flex: none; padding: 20px 6px 69px 0; }
.chat-input {
  max-width: 880px;
  height: 50px;
  margin: 0 auto;
  padding: 0 9px 1px 11px;
  display: flex;
  align-items: center;
  border-radius: 10px;
  background: #f0f2f6;
}
.chat-input input { flex: 1; height: 32px; }
.chat-input input::placeholder { color: #a0a1a9; }
.pill { display: flex; border-radius: 15px; overflow: hidden; background: #fff; box-shadow: 0 1px 4px #0005; }
.pill-bot { background: #058b4b; }
.manage {
  position: absolute;
  right: 0;
  bottom: 0;
  height: 54px;
  padding: 0 28px 0 30px;
  gap: 20px;
  border-radius: 10px 0 0;
  background: #0e1117;
  color: #fff;
  font-weight: 500;
  font-size: 16px;
}

/* Windows taskbar */
.taskbar {
  flex: none;
  height: 59px;
  display: grid;
  grid-template-columns: 1fr auto 1fr;
  border-top: 1px solid #b1b3c0;
  background: linear-gradient(90deg, #e8eefb, #e9ebfa 18%, #e4e4f1 26%, #e6e6f4 60%, #e9edfb 85%, #e8eff9);
  color: #1a1a1a;
  font-size: 14px;
  line-height: 20px;
}
.weather { justify-content: flex-start; gap: 6px; padding-left: 25px; }
.weather-icon { position: relative; }
.weather-icon b {
  position: absolute;
  left: 14px;
  top: -4px;
  width: 20px;
  border-radius: 50%;
  background: #c42b1c;
  color: #fff;
  font-size: 13px;
}
.weather-text { display: flex; flex-direction: column; text-align: left; }
.muted { color: #5d5f68; }
.dock { display: flex; align-items: center; padding-left: 2px; }
.app-btn { position: relative; width: 55px; height: 58px; }
.app-btn.open::after {
  content: "";
  position: absolute;
  bottom: 5px;
  width: 8px;
  height: 4px;
  border-radius: 2px;
  background: #85868d;
}
.app-btn.current { width: 49px; height: 49px; margin: 0 3px; border-radius: 6px; background: #f5f6fc; }
.app-btn.current svg { margin: 0 0 6px 6px; }
.app-btn.current::after { bottom: 0; width: 20px; background: #0a78d4; }
.search {
  width: 273px;
  height: 39px;
  margin: 0 3px 0 5px;
  padding: 0 2px 0 14px;
  display: flex;
  align-items: center;
  gap: 12px;
  border: 1px solid #d0d1df;
  border-radius: 20px;
  background: #f8f9fd;
}
.search input { flex: 1; font-size: 16px; height: 30px; }
.search input::placeholder { color: #5b5b60; }
.many {
  position: absolute;
  left: 17px;
  top: -5px;
  width: 18px;
  border-radius: 50%;
  background: #e3545a;
  color: #fff;
  font-size: 12px;
  line-height: 18px;
}
.tray { display: flex; align-items: center; justify-content: flex-end; gap: 10px; padding-right: 25px; }
.mic { margin: 0 13px 0 15px; }
.clock { display: flex; flex-direction: column; text-align: right; margin-left: 10px; }
```
